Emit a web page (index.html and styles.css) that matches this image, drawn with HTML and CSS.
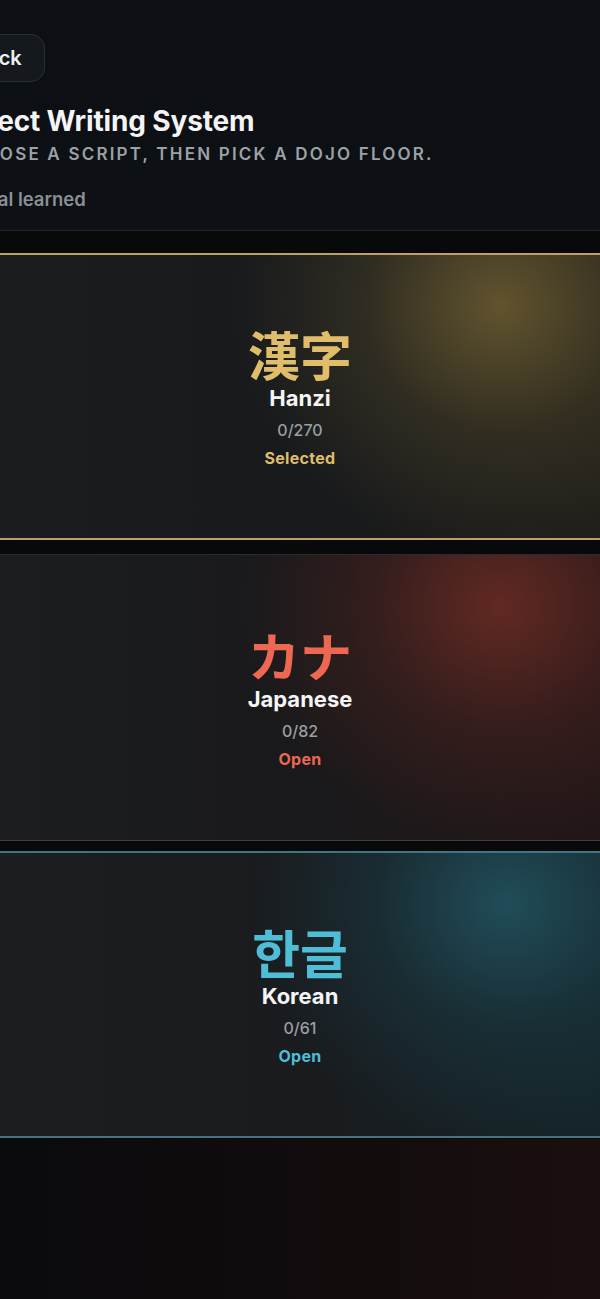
FILE: index.html
```html
<!DOCTYPE html>
<html lang="en">
<head>
<meta charset="utf-8">
<title>Select Writing System</title>
<link rel="stylesheet" href="styles.css">
</head>
<body>
<div class="page">
  <header class="header">
    <button class="back-btn">Back</button>
    <h1 class="title">Select Writing System</h1>
    <p class="subtitle">Choose a script, then pick a dojo floor.</p>
    <p class="learned">0 / 413 total learned</p>
  </header>
  <main class="cards">
    <section class="card card-hanzi">
      <div class="glyph">漢字</div>
      <div class="name">Hanzi</div>
      <div class="count">0/270</div>
      <div class="status">Selected</div>
    </section>
    <section class="card card-kana">
      <div class="glyph">カナ</div>
      <div class="name">Japanese</div>
      <div class="count">0/82</div>
      <div class="status">Open</div>
    </section>
    <section class="card card-hangul">
      <div class="glyph">한글</div>
      <div class="name">Korean</div>
      <div class="count">0/61</div>
      <div class="status">Open</div>
    </section>
  </main>
  <div class="footer-space"></div>
</div>
</body>
</html>
```

FILE: styles.css
```css
html, body {
  margin: 0;
  padding: 0;
  overflow-x: hidden;
}

body {
  background: linear-gradient(90deg, #0a0a0d 0%, #120c0d 55%, #1a0f0e 100%);
  font-family: Inter, "Noto Sans", "Liberation Sans", sans-serif;
  color: #f2f2f2;
  height: 1299px;
  overflow: hidden;
}

.page {
  width: 690px;
  margin-left: -45px;
}

.header {
  display: flex;
  flex-direction: column;
  align-items: flex-start;
  padding: 34px 0 0 0;
  height: 196px;
  background: linear-gradient(180deg, #0c0f13 0%, #0d1115 100%);
  border-bottom: 1px solid #23272b;
}

.back-btn {
  height: 48px;
  padding: 0 22px 0 18px;
  background: #15191d;
  border: 1.5px solid #2b3035;
  border-radius: 14px;
  color: #eef0f2;
  font-family: Inter, "Noto Sans", sans-serif;
  font-size: 20px;
  font-weight: 600;
}

.title {
  margin: 22px 0 0 0;
  font-size: 28px;
  line-height: 34px;
  font-weight: 700;
  letter-spacing: -0.15px;
  color: #f4f4f4;
}

.subtitle {
  margin: 4px 0 0 0;
  font-size: 17px;
  line-height: 24px;
  font-weight: 600;
  letter-spacing: 2.2px;
  text-transform: uppercase;
  color: #9da1a6;
}

.learned {
  margin: 21px 0 0 -46px;
  font-size: 18.5px;
  line-height: 24px;
  font-weight: 600;
  color: #8c8f93;
}

.cards {
  display: flex;
  flex-direction: column;
  padding: 22px 0 0 0;
  background: #07090b;
}

.card {
  height: 283px;
  display: flex;
  flex-direction: column;
  align-items: center;
  justify-content: center;
  background-color: #1b1d20;
}

.card-hanzi {
  border-top: 2px solid #bfa062;
  border-bottom: 2px solid #bfa062;
  background-image:
    radial-gradient(ellipse 270px 250px at 79% 18%, rgba(120, 102, 52, 0.75), rgba(90, 78, 45, 0.35) 50%, rgba(0, 0, 0, 0) 100%),
    linear-gradient(90deg, #1b1d20 0%, #17191c 50%, #201e19 100%);
}

.card-kana {
  margin-top: 14px;
  height: 285px;
  border-top: 1px solid #2a2c2f;
  border-bottom: 1px solid #4a3a3a;
  background-image:
    radial-gradient(ellipse 260px 240px at 79% 18%, rgba(110, 44, 36, 0.85), rgba(80, 36, 32, 0.45) 50%, rgba(0, 0, 0, 0) 100%),
    linear-gradient(90deg, #1c1e21 0%, #19191b 50%, #231617 100%);
}

.card-hangul {
  margin-top: 10px;
  height: 283px;
  border-top: 2px solid #3f7585;
  border-bottom: 2px solid #3f7585;
  background-image:
    radial-gradient(ellipse 260px 240px at 80% 18%, rgba(34, 84, 98, 0.85), rgba(28, 62, 72, 0.45) 50%, rgba(0, 0, 0, 0) 100%),
    linear-gradient(90deg, #1c1e21 0%, #191b1e 50%, #14262b 100%);
}

.glyph {
  font-family: "Noto Sans CJK SC", "Noto Sans CJK JP", "Noto Sans CJK KR", sans-serif;
  font-size: 52px;
  line-height: 58px;
  font-weight: 700;
}

.card-kana .glyph {
  font-family: "Noto Sans CJK JP", sans-serif;
}

.card-hangul .glyph {
  font-family: "Noto Sans CJK KR", sans-serif;
}

.name {
  margin-top: 1px;
  font-size: 22px;
  line-height: 28px;
  font-weight: 700;
  color: #f5f5f5;
}

.count {
  margin-top: 8px;
  font-size: 16px;
  line-height: 20px;
  font-weight: 500;
  color: #9c9ea1;
}

.status {
  margin-top: 8px;
  font-size: 16px;
  line-height: 20px;
  font-weight: 700;
  letter-spacing: 0.3px;
}

.card-hanzi .glyph, .card-hanzi .status { color: #dfbd6b; }
.card-kana .glyph, .card-kana .status { color: #ee6752; }
.card-hangul .glyph, .card-hangul .status { color: #4fbdd6; }

.footer-space {
  height: 200px;
  border-top: 1px solid #050607;
}
```
